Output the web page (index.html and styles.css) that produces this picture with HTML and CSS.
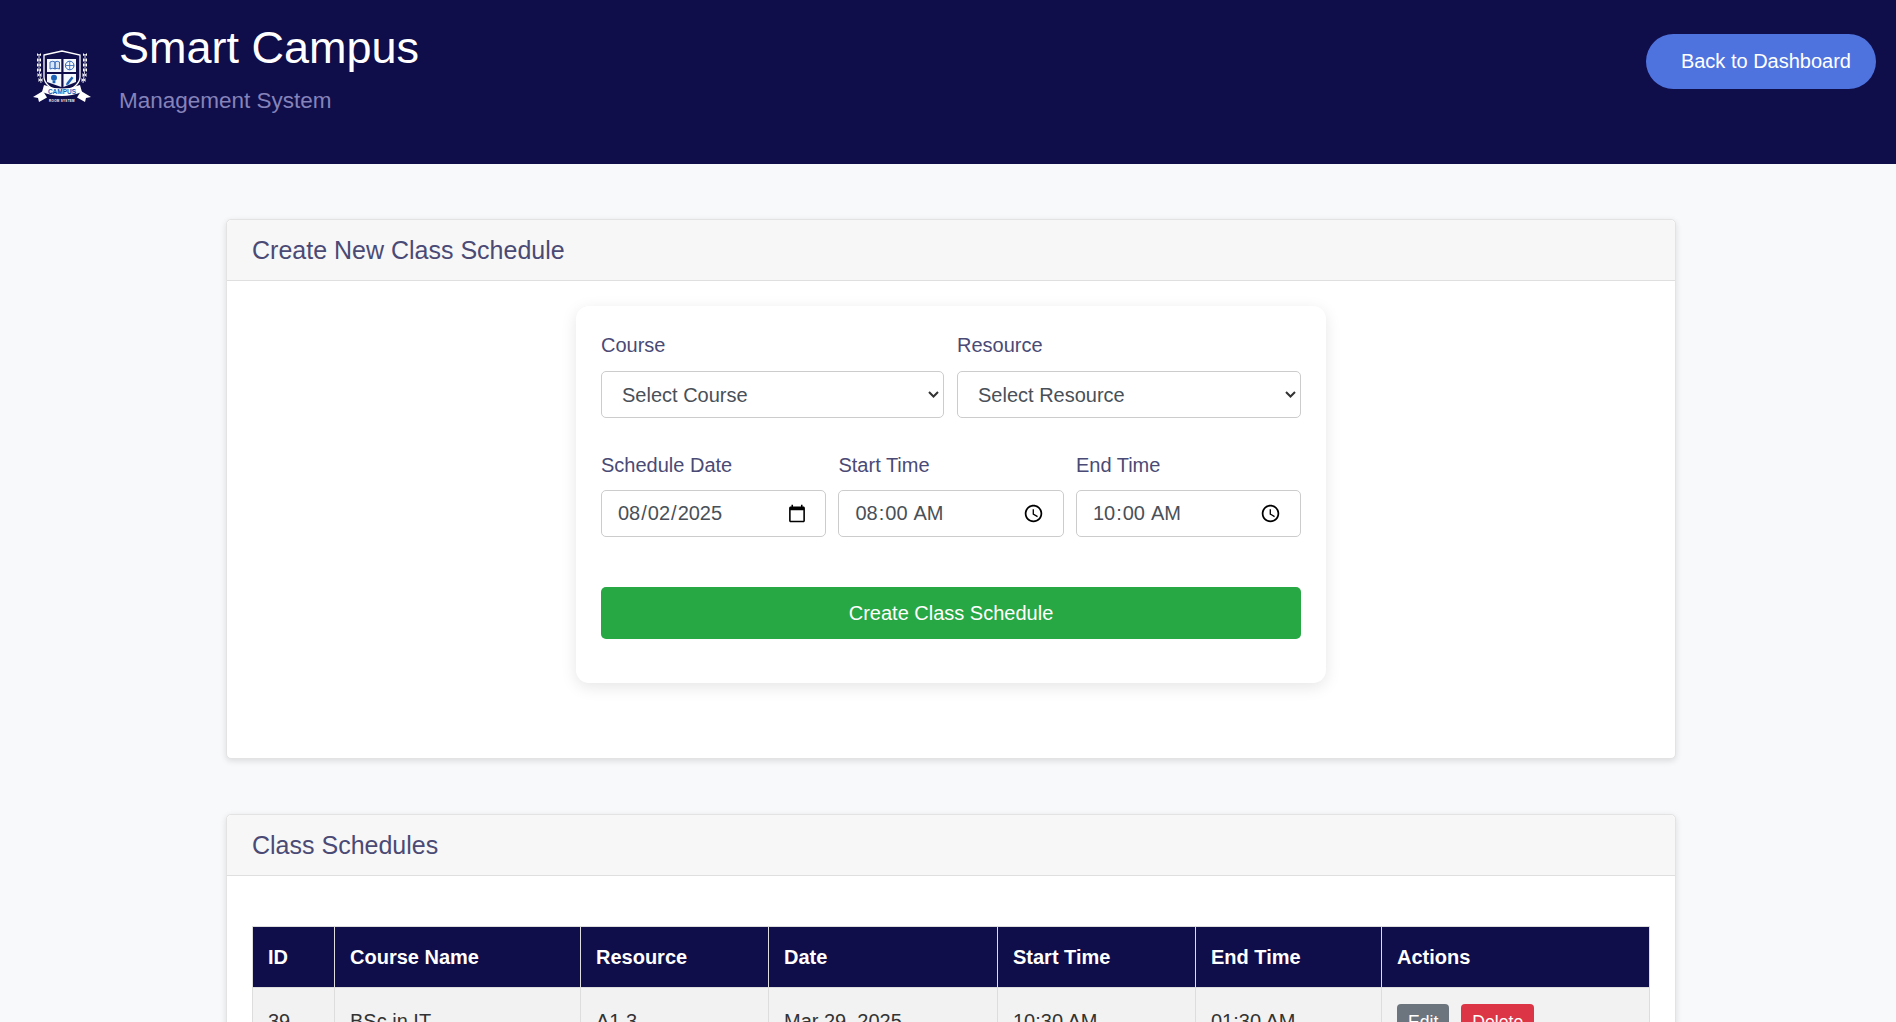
FILE: index.html
```html
<!DOCTYPE html>
<html lang="en">
<head>
<meta charset="utf-8">
<title>Smart Campus</title>
<link rel="stylesheet" href="styles.css">
</head>
<body>
<header class="topbar">
  <div class="brand">
    <svg class="logo" viewBox="0 0 58 54" width="58" height="54" aria-hidden="true">
      <g class="laurel">
        <path d="M6 4Q5 20 8 33M52 4Q53 20 50 33" fill="none" stroke="#fff" stroke-width=".8"/>
        <path d="M6 5l-2-2v3zM6 5l2-2v3zM6 10l-2-2v4zM6 10l2-2v4zM6 15l-2-2v4zM6 15l2-2v4zM6 20l-2-2v4zM6 20l2-2v4zM6.500 25l-2-2v4zM6.500 25l2-2v4zM7.500 30l-2-2v4zM7.500 30l2-2v4z"/>
        <path d="M52 5l-2-2v3zM52 5l2-2v3zM52 10l-2-2v4zM52 10l2-2v4zM52 15l-2-2v4zM52 15l2-2v4zM52 20l-2-2v4zM52 20l2-2v4zM51.500 25l-2-2v4zM51.500 25l2-2v4zM50.500 30l-2-2v4zM50.500 30l2-2v4z"/>
      </g>
      <path d="M11 5L29 1L47 5V27Q47 36 29 44Q11 36 11 27Z" fill="#0f0d4a" stroke="#fff" stroke-width="1.300"/>
      <path d="M14 9L28.300 9V22H14ZM30.500 9H43V22H30.500ZM14 24H28.300V37L14 32ZM30.500 24H43V32L30.500 37Z" fill="#f4f7fc"/>
      <path d="M17 12q3-1.500 5 0v7q-2-1.500-5 0zM22 12q2-1.500 4.500 0v7q-2.500-1.500-4.500 0z" fill="#dce7f6" stroke="#2a62b8" stroke-width=".9"/>
      <circle cx="36.700" cy="15.500" r="4.300" fill="none" stroke="#2a62b8" stroke-width="1"/>
      <path d="M32.400 15.500h8.600M36.700 11.200v8.600" stroke="#2a62b8" stroke-width=".8"/>
      <circle cx="21" cy="27.800" r="3" fill="#1c62b8"/>
      <rect x="19.600" y="30.600" width="2.800" height="2.600" fill="#1c62b8"/>
      <path d="M33.500 33l5-6.500 2 1.500-5 6.500-2.500 .8z" fill="#1c62b8"/>
      <path d="M11 35Q29 42 47 35L49 42Q29 50 9 42Z" fill="#fff"/>
      <path d="M10 41L0 47L5 48L6 52L14 47.500ZM48 41L58 47L53 48L52 52L44 47.500Z" fill="#fff"/>
      <text class="logo-word" x="29" y="43.500" text-anchor="middle">CAMPUS</text>
      <text class="logo-sub" x="29" y="52" text-anchor="middle">ROOM SYSTEM</text>
    </svg>
    <div class="brand-text">
      <h1 class="brand-title">Smart Campus</h1>
      <p class="brand-sub">Management System</p>
    </div>
  </div>
  <a class="back-btn" href="#">Back to Dashboard</a>
</header>

<main class="page">
  <section class="card">
    <h2 class="card-head">Create New Class Schedule</h2>
    <div class="card-body card-body-form">
      <form class="form-box">
        <div class="row row-two">
          <div class="field">
            <label class="field-label" for="course">Course</label>
            <select class="control control-select" id="course"><option>Select Course</option></select>
          </div>
          <div class="field">
            <label class="field-label" for="resource">Resource</label>
            <select class="control control-select" id="resource"><option>Select Resource</option></select>
          </div>
        </div>
        <div class="row row-three">
          <div class="field">
            <label class="field-label" for="date">Schedule Date</label>
            <input class="control control-input" id="date" type="date" value="2025-08-02">
          </div>
          <div class="field">
            <label class="field-label" for="start">Start Time</label>
            <input class="control control-input" id="start" type="time" value="08:00">
          </div>
          <div class="field">
            <label class="field-label" for="end">End Time</label>
            <input class="control control-input" id="end" type="time" value="10:00">
          </div>
        </div>
        <button class="submit-btn" type="button">Create Class Schedule</button>
      </form>
    </div>
  </section>

  <section class="card">
    <h2 class="card-head">Class Schedules</h2>
    <div class="card-body">
      <table class="schedule">
        <thead>
          <tr>
            <th class="col-id">ID</th>
            <th class="col-course">Course Name</th>
            <th class="col-resource">Resource</th>
            <th class="col-date">Date</th>
            <th class="col-start">Start Time</th>
            <th class="col-end">End Time</th>
            <th class="col-actions">Actions</th>
          </tr>
        </thead>
        <tbody>
          <tr>
            <td>39</td>
            <td>BSc in IT</td>
            <td>A1.3</td>
            <td>Mar 29, 2025</td>
            <td>10:30 AM</td>
            <td>01:30 AM</td>
            <td><a class="mini-btn mini-edit" href="#">Edit</a><a class="mini-btn mini-delete" href="#">Delete</a></td>
          </tr>
        </tbody>
      </table>
    </div>
  </section>
</main>
</body>
</html>
```

FILE: styles.css
```css
* { box-sizing: border-box; }
html, body { height: 100%; }
body {
  margin: 0;
  overflow: hidden;
  background: #f8f9fb;
  color: #333;
  font-family: "Liberation Sans", Arial, sans-serif;
}
.topbar {
  height: 164px;
  background: #0f0d4a;
  display: flex;
  justify-content: space-between;
  align-items: flex-start;
  padding: 20px 20px 0 33px;
}
.brand { display: flex; align-items: flex-start; gap: 28px; }
.logo { flex: none; margin-top: 30px; overflow: visible; }
.laurel { fill: #fff; }
.logo-word { font: bold 6.500px "Liberation Sans", sans-serif; fill: #1c62b8; }
.logo-sub { font: bold 3px "Liberation Sans", sans-serif; fill: #fff; letter-spacing: .3px; }
.brand-title { margin: 1px 0 0; font-size: 45px; font-weight: 400; line-height: 54px; color: #fff; }
.brand-sub { margin: 13px 0 0; font-size: 22.500px; line-height: 26px; color: #8583b9; }
.back-btn {
  margin-top: 14px;
  height: 55px;
  border-radius: 28px;
  background: #4e73df;
  color: #fff;
  font-size: 20px;
  line-height: 54px;
  padding: 0 25px 0 35px;
  text-decoration: none;
}
.page { padding: 55px 220px 0 226px; }
.card {
  width: 1450px;
  background: #fff;
  border: 1px solid #e3e3e3;
  border-radius: 5px;
  margin-bottom: 55px;
  box-shadow: 0 2px 6px rgba(0, 0, 0, .12);
}
.card-head {
  margin: 0;
  height: 61px;
  padding: 0 25px;
  font-size: 25px;
  font-weight: 400;
  line-height: 61px;
  color: #4a4a75;
  background: #f7f7f7;
  border-bottom: 1px solid #dfdfdf;
  border-radius: 5px 5px 0 0;
}
.card-body { padding: 50px 25px 25px; }
.card-body-form { padding: 25px 25px 75px; }
.form-box {
  width: 750px;
  margin: 0 auto;
  padding: 25px 25px 44px;
  background: #fff;
  border-radius: 13px;
  box-shadow: 0 4px 16px rgba(0, 0, 0, .1);
}
.row { display: grid; gap: 13px; margin-bottom: 33px; }
.row-two { grid-template-columns: 343px 344px; }
.row-three { grid-template-columns: repeat(3, 1fr); gap: 12.400px; margin-bottom: 50px; }
.row-three .field-label { margin-bottom: 10px; }
.field { display: flex; flex-direction: column; }
.field-label {
  font-size: 20px;
  line-height: 29px;
  margin-bottom: 11px;
  color: #4a4a75;
}
.control {
  height: 47px;
  width: 100%;
  background: #fff;
  border: 1px solid #ccc;
  border-radius: 5px;
  font-family: inherit;
  font-size: 20px;
  color: #495057;
}
.control-select {
  appearance: none;
  padding: 0 16px 0 20px;
  background: #fff url("data:image/svg+xml,%3Csvg xmlns='http://www.w3.org/2000/svg' width='11' height='7'%3E%3Cpath d='M1 1l4.500 4.500L10 1' fill='none' stroke='%23333' stroke-width='2'/%3E%3C/svg%3E") no-repeat right 4px center;
}
.control-input { padding: 0 16px 0 15px; }
.submit-btn {
  display: block;
  width: 100%;
  height: 52px;
  border: 0;
  border-radius: 5px;
  background: #28a745;
  color: #fff;
  font-family: inherit;
  font-size: 20px;
}
.schedule { width: 100%; border-collapse: collapse; table-layout: fixed; font-size: 20px; }
.schedule th {
  height: 61px;
  padding: 0 15px;
  text-align: left;
  font-size: 20px;
  font-weight: 700;
  color: #fff;
  background: #0f0d4a;
  border: 1px solid #ddd;
}
.schedule td {
  height: 68px;
  padding: 0 15px;
  color: #333;
  background: #f2f2f2;
  border: 1px solid #ddd;
}
.col-id { width: 82px; }
.col-course { width: 246px; }
.col-resource { width: 188px; }
.col-date { width: 229px; }
.col-start { width: 198px; }
.col-end { width: 186px; }
.mini-btn {
  display: inline-block;
  padding: 0 11px;
  height: 36px;
  line-height: 36px;
  border-radius: 4px;
  font-size: 17.600px;
  color: #fff;
  text-decoration: none;
}
.mini-edit { background: #6c757d; margin-right: 12px; }
.mini-delete { background: #dc3545; }
```
